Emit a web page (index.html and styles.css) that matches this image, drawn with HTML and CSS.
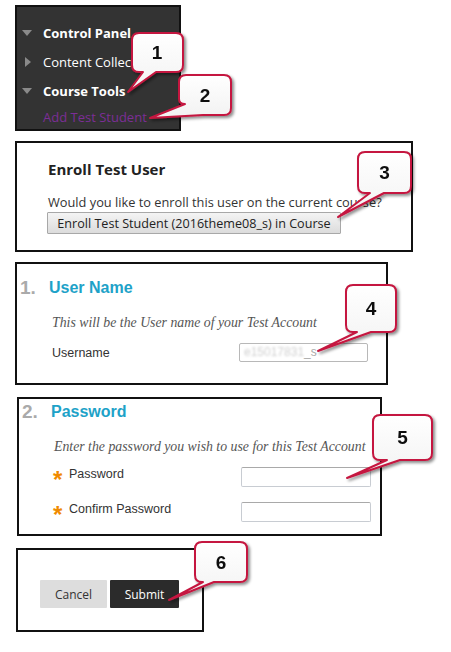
FILE: index.html
```html
<!DOCTYPE html>
<html>
<head>
<meta charset="utf-8">
<link rel="stylesheet" href="styles.css">
</head>
<body>
<div class="page">
  <nav class="cp">
    <div class="cp-row"><span class="tri tri-down"></span><span class="cp-head">Control Panel</span></div>
    <div class="cp-row"><span class="tri tri-right"></span><span class="cp-item">Content Collection</span></div>
    <div class="cp-row"><span class="tri tri-down"></span><span class="cp-head">Course Tools</span></div>
    <div class="cp-row cp-sub"><span class="cp-link">Add Test Student</span></div>
  </nav>

  <section class="panel enroll">
    <h2 class="enroll-title">Enroll Test User</h2>
    <p class="enroll-text">Would you like to enroll this user on the current course?</p>
    <button class="enroll-btn">Enroll Test Student (2016theme08_s) in Course</button>
  </section>

  <section class="panel step step-user">
    <h3 class="step-head"><span class="step-num">1.</span><span class="step-title">User Name</span></h3>
    <p class="step-note">This will be the User name of your Test Account</p>
    <div class="field">
      <span class="label">Username</span>
      <span class="input"><span class="blur">e15017831</span>_s</span>
    </div>
  </section>

  <section class="panel step step-pass">
    <h3 class="step-head"><span class="step-num">2.</span><span class="step-title">Password</span></h3>
    <p class="step-note">Enter the password you wish to use for this Test Account</p>
    <div class="field req">
      <span class="label"><span class="star">*</span>Password</span>
      <span class="input"></span>
    </div>
    <div class="field req second">
      <span class="label"><span class="star">*</span>Confirm Password</span>
      <span class="input"></span>
    </div>
  </section>

  <section class="panel actions">
    <button class="btn btn-cancel">Cancel</button>
    <button class="btn btn-submit">Submit</button>
  </section>

  <svg class="callouts" width="451" height="652" viewBox="0 0 451 652">
    <defs>
      <filter id="sh" x="-20%" y="-20%" width="150%" height="150%">
        <feDropShadow dx="2" dy="2" stdDeviation="1.5" flood-color="#000" flood-opacity="0.45"/>
      </filter>
      <linearGradient id="fillg" x1="0" y1="0" x2="0" y2="1">
        <stop offset="0" stop-color="#ffffff"/>
        <stop offset="1" stop-color="#f2f2f2"/>
      </linearGradient>
    </defs>
    <g class="co" filter="url(#sh)">
      <path d="M139 33 H176 Q183 33 183 40 V65 Q183 72 176 72 H156 L128 92 L143 72 H139 Q132 72 132 65 V40 Q132 33 139 33 Z"/>
      <text x="157" y="59">1</text>
    </g>
    <g class="co" filter="url(#sh)">
      <path d="M186 75 H224 Q231 75 231 82 V108 Q231 115 224 115 H203 L150 118 L185 104 Q179 104 179 99 V82 Q179 75 186 75 Z"/>
      <text x="205" y="102">2</text>
    </g>
    <g class="co" filter="url(#sh)">
      <path d="M365 152 H404 Q411 152 411 159 V186 Q411 193 404 193 H384 L338 217 L370 193 H365 Q358 193 358 186 V159 Q358 152 365 152 Z"/>
      <text x="384.5" y="179">3</text>
    </g>
    <g class="co" filter="url(#sh)">
      <path d="M353 285 H389 Q396 285 396 292 V325 Q396 332 389 332 H371 L318 351 L357 332 H353 Q346 332 346 325 V292 Q346 285 353 285 Z"/>
      <text x="371" y="315">4</text>
    </g>
    <g class="co" filter="url(#sh)">
      <path d="M380 415 H425 Q432 415 432 422 V453 Q432 460 425 460 H400 L347 478 L387 460 H380 Q373 460 373 453 V422 Q373 415 380 415 Z"/>
      <text x="402.5" y="444">5</text>
    </g>
    <g class="co" filter="url(#sh)">
      <path d="M202 542 H240 Q247 542 247 549 V575 Q247 582 240 582 H214 L169 600 L203 582 H202 Q195 582 195 575 V549 Q195 542 202 542 Z"/>
      <text x="221" y="569">6</text>
    </g>
  </svg>
</div>
</body>
</html>
```

FILE: styles.css
```css
html, body {
  margin: 0;
  padding: 0;
  background: #fff;
}

.page {
  position: relative;
  width: 451px;
  height: 652px;
  padding-top: 5px;
  box-sizing: border-box;
  font-family: "Open Sans", "Liberation Sans", sans-serif;
}

/* Control panel */
.cp {
  margin-left: 15px;
  width: 166px;
  height: 126px;
  box-sizing: border-box;
  background: #333333;
  border: 2px solid #111;
  padding: 11px 0 0 5px;
}

.cp-row {
  display: flex;
  align-items: center;
  height: 29px;
  font-size: 13px;
  white-space: nowrap;
  overflow: hidden;
}

.cp-sub {
  height: 23px;
  padding-left: 21px;
}

.tri {
  display: block;
  width: 0;
  height: 0;
  flex: none;
}

.tri-down {
  border-left: 5px solid transparent;
  border-right: 5px solid transparent;
  border-top: 6px solid #8a8a8a;
  margin-right: 11px;
}

.tri-right {
  border-top: 5px solid transparent;
  border-bottom: 5px solid transparent;
  border-left: 6px solid #8a8a8a;
  margin-left: 3px;
  margin-right: 12px;
}

.cp-head {
  color: #fff;
  font-weight: 700;
}

.cp-item {
  color: #fff;
}

.cp-link {
  color: #7c2e96;
}

/* Panels */
.panel {
  box-sizing: border-box;
  border: 2px solid #111;
  background: #fff;
}

.enroll {
  margin: 10px 0 0 15px;
  width: 398px;
  height: 111px;
  padding: 16px 0 0 30px;
}

.enroll-title {
  margin: 0 0 0 1px;
  font-size: 15px;
  line-height: 20px;
  font-weight: 700;
  color: #222;
}

.enroll-text {
  margin: 14px 0 1px 1px;
  font-size: 12.8px;
  line-height: 18px;
  color: #333;
  white-space: nowrap;
}

.enroll-btn {
  display: block;
  margin: 0;
  width: 294px;
  height: 22px;
  padding: 0;
  border: 1px solid #a8a8a8;
  border-radius: 1px;
  background: linear-gradient(#f4f4f4, #dcdcdc);
  font-family: "Open Sans", "Liberation Sans", sans-serif;
  font-size: 12.6px;
  color: #222;
  text-align: center;
}

/* Steps */
.step {
  padding-left: 3px;
}

.step-user {
  margin: 10px 0 0 15px;
  width: 373px;
  height: 123px;
  padding-top: 12px;
}

.step-pass {
  margin: 12px 0 0 17px;
  width: 365px;
  height: 139px;
  padding-top: 1px;
}

.step-head {
  display: flex;
  align-items: center;
  margin: 0;
  height: 24px;
  font-family: "Liberation Sans", Arial, sans-serif;
  font-weight: 700;
}

.step-num {
  width: 29px;
  font-size: 19px;
  color: #aaaaaa;
}

.step-title {
  font-size: 16px;
  color: #1ea2c8;
}

.step-note {
  margin: 14px 0 0 32px;
  font-family: "Liberation Serif", "Times New Roman", serif;
  font-style: italic;
  font-size: 13.8px;
  line-height: 18px;
  color: #555;
  white-space: nowrap;
}

.field {
  display: flex;
  align-items: center;
  margin: 11px 0 0 32px;
  height: 19px;
  font-family: "Liberation Sans", Arial, sans-serif;
  font-size: 12.5px;
  color: #333;
}

.step-user .field .label {
  width: 187px;
}

.field .input {
  box-sizing: border-box;
  width: 129px;
  height: 19px;
  border: 1px solid #b8b8b8;
  border-radius: 2px;
  padding-left: 4px;
  font-size: 12px;
  line-height: 17px;
  color: #aaa;
  background: #fff;
}

.blur {
  color: #d0d0d0;
  filter: blur(1px);
}

.req {
  height: 20px;
}

.req .label {
  display: flex;
  align-items: center;
  width: 187px;
  margin-top: -6px;
}

.req .input {
  width: 130px;
  height: 20px;
  border-color: #c8ccd2;
  border-top-color: #a9a9a9;
}

.second {
  margin-top: 15px;
}

.star {
  width: 16px;
  font-size: 24px;
  line-height: 12px;
  font-weight: 700;
  color: #f08a00;
  padding-top: 11px;
  margin-left: -1px;
}

/* Actions */
.actions {
  margin: 12px 0 0 16px;
  width: 188px;
  height: 84px;
  padding: 30px 0 0 22px;
  display: flex;
  gap: 3px;
}

.btn {
  height: 28px;
  margin: 0;
  border: 0;
  border-radius: 1px;
  font-family: "Open Sans", "Liberation Sans", sans-serif;
  font-size: 12px;
  padding: 0;
}

.btn-cancel {
  width: 67px;
  background: #dddddd;
  color: #333;
}

.btn-submit {
  width: 69px;
  background: #2b2b2b;
  color: #fff;
}

/* Callouts overlay */
.callouts {
  position: absolute;
  left: 0;
  top: 0;
  pointer-events: none;
}

.co path {
  fill: url(#fillg);
  stroke: #c5173f;
  stroke-width: 2;
  stroke-linejoin: round;
}

.co text {
  font-family: "Liberation Sans", Arial, sans-serif;
  font-weight: 700;
  font-size: 19px;
  fill: #111;
  text-anchor: middle;
}
```
